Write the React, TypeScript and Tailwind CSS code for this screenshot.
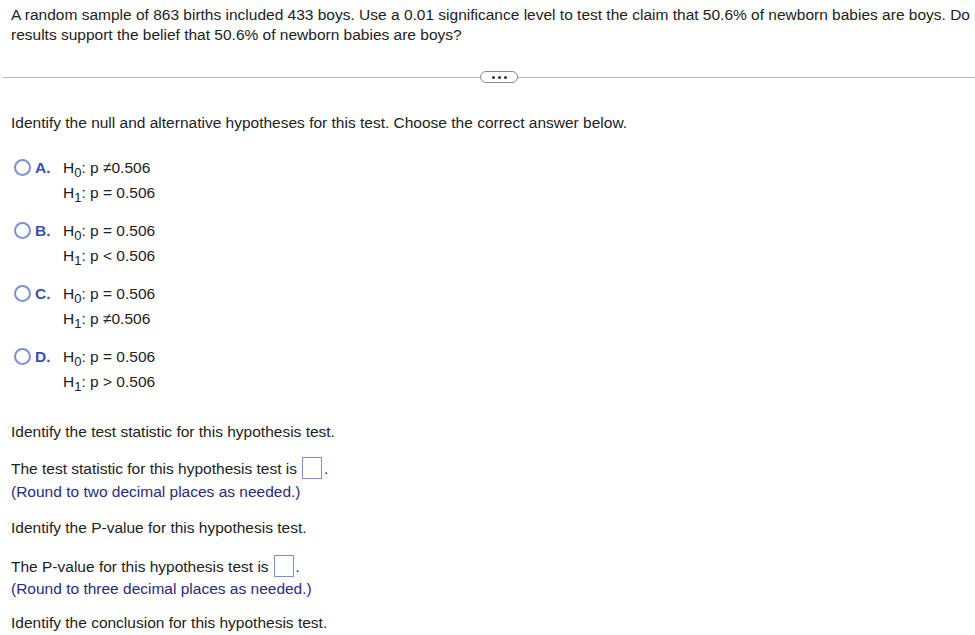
import React from 'react';

type Option = {
  letter: string;
  h0: string;
  h1: string;
};

const options: Option[] = [
  { letter: 'A.', h0: 'p \u22600.506', h1: 'p = 0.506' },
  { letter: 'B.', h0: 'p = 0.506', h1: 'p < 0.506' },
  { letter: 'C.', h0: 'p = 0.506', h1: 'p \u22600.506' },
  { letter: 'D.', h0: 'p = 0.506', h1: 'p > 0.506' },
];

const Hyp: React.FC<{ sub: string; text: string }> = ({ sub, text }) => (
  <div className="h-[25px] leading-[25px]">
    H<span className="text-[13px] relative top-[4px]">{sub}</span>
    <span>: {text}</span>
  </div>
);

const AnswerBox: React.FC = () => (
  <span className="inline-block w-[20px] h-[22px] border border-[#7b93c9] align-middle ml-[5px] mr-[2px] -mt-[3px]" />
);

export default function App() {
  return (
    <div
      className="w-[975px] h-[635px] bg-white text-[#222] text-[15.5px] overflow-hidden"
      style={{ fontFamily: '"Liberation Sans", Arial, sans-serif' }}
    >
      <div className="pl-[11px] pr-[1px] pt-[5px] leading-[20px]">
        A random sample of 863 births included 433 boys. Use a 0.01 significance level to test the claim that 50.6% of
        newborn babies are boys. Do results support the belief that 50.6% of newborn babies are boys?
      </div>

      <div className="mt-[26px] ml-[3px] flex items-center">
        <div className="w-[477px] h-px bg-[#b5b5b5]" />
        <div className="w-[38px] h-[12px] rounded-full border border-[#8a8a8a] flex items-center justify-center gap-[3px]">
          <span className="w-[3px] h-[3px] bg-[#333] rounded-full" />
          <span className="w-[3px] h-[3px] bg-[#333] rounded-full" />
          <span className="w-[3px] h-[3px] bg-[#333] rounded-full" />
        </div>
        <div className="flex-1 h-px bg-[#b5b5b5]" />
      </div>

      <div className="px-[11px] mt-[30px] leading-[20px]">
        Identify the null and alternative hypotheses for this test. Choose the correct answer below.
      </div>

      <div className="mt-[22px] flex flex-col gap-[13px]">
        {options.map((o) => (
          <div key={o.letter} className="flex">
            <div className="w-[34px] flex justify-end pr-[3px] pt-[4px]">
              <span className="w-[17px] h-[17px] rounded-full border-2 border-[#7e8fd3]" />
            </div>
            <div className="w-[29px] pl-[1px] h-[25px] leading-[25px] font-bold text-[#3a4fae]">{o.letter}</div>
            <div>
              <Hyp sub="0" text={o.h0} />
              <Hyp sub="1" text={o.h1} />
            </div>
          </div>
        ))}
      </div>

      <div className="px-[11px] mt-[28px] leading-[20px]">Identify the test statistic for this hypothesis test.</div>

      <div className="px-[11px] mt-[16px] leading-[22px]">
        The test statistic for this hypothesis test is
        <AnswerBox />.
      </div>
      <div className="px-[11px] mt-[1px] leading-[22px] text-[#2b2a7c]">(Round to two decimal places as needed.)</div>

      <div className="px-[11px] mt-[15px] leading-[20px]">Identify the P-value for this hypothesis test.</div>

      <div className="px-[11px] mt-[18px] leading-[22px]">
        The P-value for this hypothesis test is
        <AnswerBox />.
      </div>
      <div className="px-[11px] leading-[22px] text-[#2b2a7c]">(Round to three decimal places as needed.)</div>

      <div className="px-[11px] mt-[13px] leading-[20px]">Identify the conclusion for this hypothesis test.</div>
    </div>
  );
}
